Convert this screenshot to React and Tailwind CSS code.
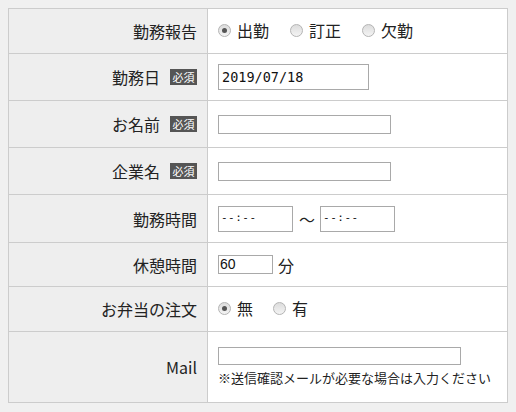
function Badge() {
  return (
    <span className="ml-[10px] inline-flex h-4 w-[27px] items-center justify-center bg-[#555555] text-[11px] leading-none text-white">
      必須
    </span>
  );
}

function Radio({ checked, label }) {
  return (
    <label className="flex items-center">
      <span className="flex h-[13px] w-[13px] items-center justify-center rounded-full border border-[#b4b4b4] bg-gradient-to-b from-[#dcdcdc] to-[#f4f4f4]">
        {checked && <span className="h-[5px] w-[5px] rounded-full bg-[#555555]" />}
      </span>
      <span className="ml-[6px] text-[16px] text-[#222222]">{label}</span>
    </label>
  );
}

function Row({ label, required, height, children, last }) {
  return (
    <div className={"flex " + (last ? "" : "border-b border-[#cccccc]")} style={{ height }}>
      <div className="flex w-[199px] shrink-0 items-center justify-end border-r border-[#cccccc] bg-[#eeeeee] pr-[10px] text-[16px] text-[#222222]">
        <span>{label}</span>
        {required && <Badge />}
      </div>
      <div className="flex flex-1 items-center bg-white pl-[10px]">{children}</div>
    </div>
  );
}

const inputCls = "border border-[#a9a9a9] bg-white text-[#111111] outline-none";

export default function App() {
  return (
    <div
      className="min-h-screen bg-[#f0f0f0] p-2"
      style={{ fontFamily: '"Noto Sans CJK JP", "Noto Sans", sans-serif' }}
    >
      <div className="w-[500px] border border-[#cccccc]">
        <Row label="勤務報告" height={45}>
          <div className="flex items-center gap-[21px] pb-[2px]">
            <Radio checked label="出勤" />
            <Radio label="訂正" />
            <Radio label="欠勤" />
          </div>
        </Row>
        <Row label="勤務日" required height={47}>
          <div className={inputCls + " flex h-[26px] w-[151px] items-center pl-[3px] font-['DejaVu_Sans_Mono'] text-[13.5px]"}>
            2019/07/18
          </div>
        </Row>
        <Row label="お名前" required height={47}>
          <div className={inputCls + " h-[19px] w-[173px]"} />
        </Row>
        <Row label="企業名" required height={47}>
          <div className={inputCls + " h-[19px] w-[173px]"} />
        </Row>
        <Row label="勤務時間" height={48}>
          <div className="flex items-center">
            <div className={inputCls + " flex h-[26px] w-[75px] items-center pl-[2px] font-['DejaVu_Sans_Mono'] text-[11px] tracking-[0.5px]"}>
              --:--
            </div>
            <span className="ml-[6px] mr-[5px] text-[16px] text-[#222222]">〜</span>
            <div className={inputCls + " flex h-[26px] w-[75px] items-center pl-[2px] font-['DejaVu_Sans_Mono'] text-[11px] tracking-[0.5px]"}>
              --:--
            </div>
          </div>
        </Row>
        <Row label="休憩時間" height={44}>
          <div className="flex items-center">
            <div className={inputCls + " flex h-[19px] w-[55px] items-center pl-[1px] font-['Liberation_Sans'] text-[14px]"}>
              60
            </div>
            <span className="ml-[5px] text-[16px] text-[#222222]">分</span>
          </div>
        </Row>
        <Row label="お弁当の注文" height={45}>
          <div className="flex items-center gap-[20px] pb-[2px]">
            <Radio checked label="無" />
            <Radio label="有" />
          </div>
        </Row>
        <Row label="Mail" height={70} last>
          <div className="flex flex-col">
            <div className={inputCls + " h-[18px] w-[243px]"} />
            <span className="mt-[4px] text-[13px] leading-[18px] text-[#222222]">
              ※送信確認メールが必要な場合は入力ください
            </span>
          </div>
        </Row>
      </div>
    </div>
  );
}
